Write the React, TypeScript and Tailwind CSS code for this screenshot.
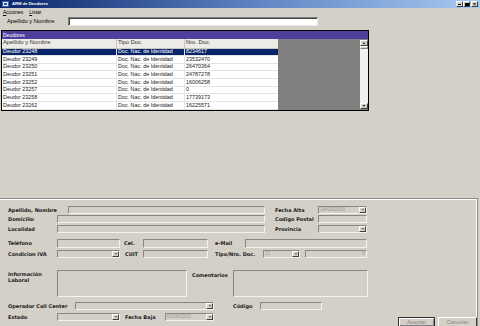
import React from "react";

const rows = [
  ["Deudor 23248", "Doc. Nac. de Identidad", "8234617"],
  ["Deudor 23249", "Doc. Nac. de Identidad", "23532470"],
  ["Deudor 23250", "Doc. Nac. de Identidad", "26470364"],
  ["Deudor 23251", "Doc. Nac. de Identidad", "24787278"],
  ["Deudor 23252", "Doc. Nac. de Identidad", "16006258"],
  ["Deudor 23257", "Doc. Nac. de Identidad", "0"],
  ["Deudor 23258", "Doc. Nac. de Identidad", "17739173"],
  ["Deudor 23262", "Doc. Nac. de Identidad", "16225571"],
];

function Label({ className, children }: { className: string; children: React.ReactNode }) {
  return (
    <div className={"shrink-0 font-['DejaVu_Sans',sans-serif] font-bold text-[5px] leading-[6px] text-[#202020] " + className}>
      {children}
    </div>
  );
}

function Box({ className, children }: { className: string; children?: React.ReactNode }) {
  return (
    <div
      className={
        "shrink-0 h-full flex items-center border border-t-[#8a8782] border-l-[#8a8782] border-b-[#f4f3ef] border-r-[#f4f3ef] bg-[#d4d0c8] text-[5px] text-[#9a978f] " +
        className
      }
    >
      {children}
    </div>
  );
}

function Arrow() {
  return (
    <div className="ml-auto mr-[0px] w-[7px] h-[6px] flex items-center justify-center bg-[#d4d0c8] border border-t-white border-l-white border-b-[#404040] border-r-[#404040]">
      <div className="w-0 h-0 border-l-[1.5px] border-r-[1.5px] border-t-[2px] border-l-transparent border-r-transparent border-t-[#555]" />
    </div>
  );
}

function Select({ className, value }: { className: string; value?: string }) {
  return (
    <Box className={className}>
      {value ? <span className="pl-[1px] leading-none">{value}</span> : null}
      <Arrow />
    </Box>
  );
}

export default function App() {
  return (
    <div className="w-[480px] h-[326px] overflow-hidden bg-[#d4d0c8] flex flex-col font-['Liberation_Sans',Arial,sans-serif] text-black">
      {/* title bar */}
      <div className="h-[8px] shrink-0 flex items-center bg-gradient-to-r from-[#0a246a] via-[#5a7fc0] to-[#a6caf0]">
        <div className="ml-[2px] w-[7px] h-[6px] bg-[#dfe8f6] border border-[#3a64b0] flex items-center justify-center">
          <div className="w-[3px] h-[2px] bg-[#2a55b5]" />
        </div>
        <span className="ml-[3px] text-white font-bold text-[4.2px] leading-none">ARM de Deudores</span>
        <div className="ml-auto mr-[2px] flex gap-[0px]">
          <div className="w-[7px] h-[6px] bg-[#d4d0c8] border border-t-white border-l-white border-b-[#404040] border-r-[#404040] flex items-end justify-center pb-[1px]">
            <div className="w-[3px] h-[1px] bg-black" />
          </div>
          <div className="w-[7px] h-[6px] bg-[#d4d0c8] border border-t-white border-l-white border-b-[#404040] border-r-[#404040] flex items-center justify-center">
            <div className="w-[4px] h-[3px] border border-black border-t-2" />
          </div>
          <div className="ml-[1px] w-[7px] h-[6px] bg-[#d4d0c8] border border-t-white border-l-white border-b-[#404040] border-r-[#404040] flex items-center justify-center text-[5px] leading-none font-bold">
            ×
          </div>
        </div>
      </div>

      {/* menu */}
      <div className="h-[8px] shrink-0 flex items-center text-[5px] leading-none pl-[3px] gap-[6px]">
        <span>
          <span className="underline">A</span>cciones
        </span>
        <span>
          <span className="underline">L</span>istar
        </span>
      </div>

      {/* search */}
      <div className="mt-[1px] h-[9px] shrink-0 flex items-center">
        <div className="ml-[7px] w-[61px] text-[5.8px] leading-none">Apellido y Nombre</div>
        <div className="w-[250px] h-full bg-white border border-t-[#808080] border-l-[#808080] border-b-[#e8e8e8] border-r-[#e8e8e8] shadow-[inset_1px_1px_0_#404040]" />
      </div>

      {/* grid */}
      <div className="mt-[4px] ml-[1px] w-[368px] shrink-0 border border-black flex flex-col">
        <div className="h-[8px] bg-[#4f3f9c] flex items-center pl-[1px] text-white text-[5px] leading-none">Deudores</div>
        <div className="flex">
          <div className="w-[276px] flex flex-col bg-white">
            <div className="h-[9.5px] flex bg-[#ecebe6] text-[5.8px] leading-none text-[#333] border-b border-[#c8c6c0]">
              <div className="w-[115px] flex items-center pl-[1px] border-r border-[#c8c6c0]">Apellido y Nombre</div>
              <div className="w-[68px] flex items-center pl-[1px] border-r border-[#c8c6c0]">Tipo Doc.</div>
              <div className="flex-1 flex items-center pl-[1px]">Nro. Doc.</div>
            </div>
            {rows.map((r, i) => (
              <div
                key={i}
                className={
                  "h-[7.66px] flex text-[5.4px] leading-none border-b border-[#e4e4e4] " +
                  (i === 0 ? "bg-[#0a246a] text-white" : "text-[#222]")
                }
              >
                <div className="w-[115px] flex items-center pl-[1px] border-r border-[#e4e4e4]">{r[0]}</div>
                <div className="w-[68px] flex items-center pl-[1px] border-r border-[#e4e4e4]">{r[1]}</div>
                <div className="flex-1 flex items-center pl-[1px]">{r[2]}</div>
              </div>
            ))}
          </div>
          <div className="flex-1 bg-[#808080]" />
          <div className="w-[8px] bg-[#808080] flex flex-col pt-[1px] pb-[1px]">
            <div className="h-[6px] bg-[#d4d0c8] border border-t-white border-l-white border-b-[#404040] border-r-[#404040] flex items-center justify-center">
              <div className="w-0 h-0 border-l-[1.5px] border-r-[1.5px] border-b-[2px] border-l-transparent border-r-transparent border-b-black" />
            </div>
            <div className="h-[3px] bg-[#d4d0c8] border border-t-white border-l-white border-b-[#808080] border-r-[#808080]" />
            <div className="flex-1 bg-[#f1f0ec]" />
            <div className="h-[6px] bg-[#d4d0c8] border border-t-white border-l-white border-b-[#404040] border-r-[#404040] flex items-center justify-center">
              <div className="w-0 h-0 border-l-[1.5px] border-r-[1.5px] border-t-[2px] border-l-transparent border-r-transparent border-t-black" />
            </div>
          </div>
        </div>
      </div>

      {/* form group */}
      <div className="mt-[87px] w-[478px] flex-1 border-t border-r border-[#8c8a85] shadow-[inset_0_1px_0_#ffffff,inset_-1px_0_0_#ffffff] flex flex-col pl-[8px]">
        {/* Row A */}
        <div className="mt-[7px] h-[8px] flex items-center">
          <Label className="w-[60px]">Apellido, Nombre</Label>
          <Box className="w-[197px]" />
          <Label className="ml-[10px] w-[43px]">Fecha Alta</Label>
          <Select className="w-[49px]" value="14/03/2003" />
        </div>
        {/* Row B */}
        <div className="mt-[1px] h-[8px] flex items-center">
          <Label className="w-[49px]">Domicilio</Label>
          <Box className="w-[208px]" />
          <Label className="ml-[10px] w-[43px]">Codigo Postal</Label>
          <Box className="w-[49px]" />
        </div>
        {/* Row C */}
        <div className="mt-[2px] h-[8px] flex items-center">
          <Label className="w-[49px]">Localidad</Label>
          <Box className="w-[208px]" />
          <Label className="ml-[10px] w-[43px]">Provincia</Label>
          <Select className="w-[49px]" />
        </div>
        {/* Row D */}
        <div className="mt-[6px] h-[9px] flex items-center">
          <Label className="w-[49px]">Teléfono</Label>
          <Box className="w-[63px]" />
          <Label className="ml-[4px] w-[19px]">Cel.</Label>
          <Box className="w-[65px]" />
          <Label className="ml-[7px] w-[30px]">e-Mail</Label>
          <Box className="w-[122px]" />
        </div>
        {/* Row E */}
        <div className="mt-[2px] h-[8px] flex items-center">
          <Label className="w-[49px]">Condicion IVA</Label>
          <Select className="w-[63px]" />
          <Label className="ml-[5px] w-[18px]">CUIT</Label>
          <Box className="w-[65px]" />
          <Label className="ml-[7px] w-[48px]">Tipo/Nro. Doc.</Label>
          <Select className="w-[37px]" value="CI" />
          <Box className="ml-[5px] w-[62px] justify-end pr-[1px]">0</Box>
        </div>
        {/* Row F */}
        <div className="mt-[12px] h-[27px] flex items-start">
          <Label className="w-[49px] mt-[1px]">
            Información
            <br />
            Laboral
          </Label>
          <Box className="w-[130px]" />
          <Label className="ml-[5px] w-[41px] mt-[2px]">Comentarios</Label>
          <Box className="w-[135px]" />
        </div>
        {/* Row G */}
        <div className="mt-[5px] h-[8px] flex items-center">
          <Label className="w-[67px]">Operador Call Center</Label>
          <Select className="w-[139px]" />
          <Label className="ml-[19px] w-[27px]">Código</Label>
          <Box className="w-[62px]" />
        </div>
        {/* Row H */}
        <div className="mt-[3px] h-[13px] flex items-start">
          <Label className="w-[49px] h-[8px] flex items-center">Estado</Label>
          <div className="h-[8px] flex">
            <Select className="w-[63px]" />
          </div>
          <Label className="ml-[5px] w-[40px] h-[8px] flex items-center">Fecha Baja</Label>
          <div className="h-[8px] flex">
            <Select className="w-[49px]" value="01/06/2011" />
          </div>
          <div className="ml-[184px] mt-[4px] w-[37px] h-[10px] border border-[#303030] bg-[#d4d0c8] flex items-center justify-center text-[5.5px] text-[#8a8782] shadow-[inset_1px_1px_0_#fff,inset_-1px_-1px_0_#808080]">
            Aceptar
          </div>
          <div className="ml-[3px] mt-[4px] w-[39px] h-[10px] border border-t-white border-l-white border-b-[#404040] border-r-[#404040] bg-[#d4d0c8] flex items-center justify-center text-[5.5px] text-[#8a8782]">
            Cancelar
          </div>
        </div>
      </div>
    </div>
  );
}
